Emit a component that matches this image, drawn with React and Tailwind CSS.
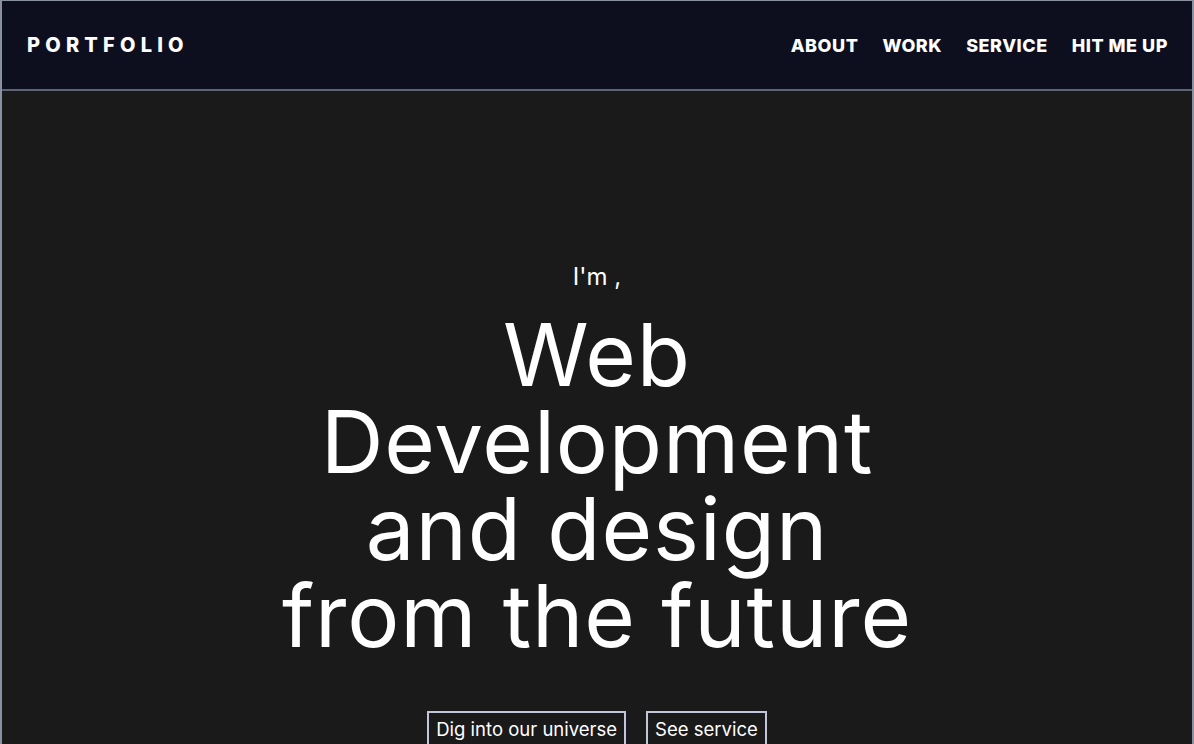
export default function App() {
  const links = ["ABOUT", "WORK", "SERVICE", "HIT ME UP"];

  return (
    <div className="h-[744px] overflow-hidden bg-[#1a1a1a] border-x-2 border-t border-[#8b90a0] font-['Inter',sans-serif] text-white">
      {/* Header */}
      <header className="h-[90px] bg-[#0d0f1f] border-b-2 border-[#5d6275] flex items-center justify-between pl-[25px] pr-[24px]">
        <div className="text-[20px] font-extrabold tracking-[0.26em]">PORTFOLIO</div>
        <nav className="flex gap-6">
          {links.map((l) => (
            <a key={l} href="#" className="text-[18px] font-extrabold tracking-[0.03em]">
              {l}
            </a>
          ))}
        </nav>
      </header>

      {/* Hero */}
      <section className="flex flex-col items-center text-center pt-[170px]">
        <p className="text-[24px] leading-[32px]">I'm ,</p>
        <h1 className="mt-[18px] text-[87px] font-normal leading-[87px] tracking-[0.01em]">
          Web
          <br />
          Development
          <br />
          and design
          <br />
          from the future
        </h1>
        <div className="flex gap-5 mt-[52px]">
          <button className="border-2 border-[#c3c6da] px-[7px] py-[4px] text-[18.5px] leading-[24px]">
            Dig into our universe
          </button>
          <button className="border-2 border-[#c3c6da] px-[7px] py-[4px] text-[18.5px] leading-[24px]">
            See service
          </button>
        </div>
      </section>
    </div>
  );
}
